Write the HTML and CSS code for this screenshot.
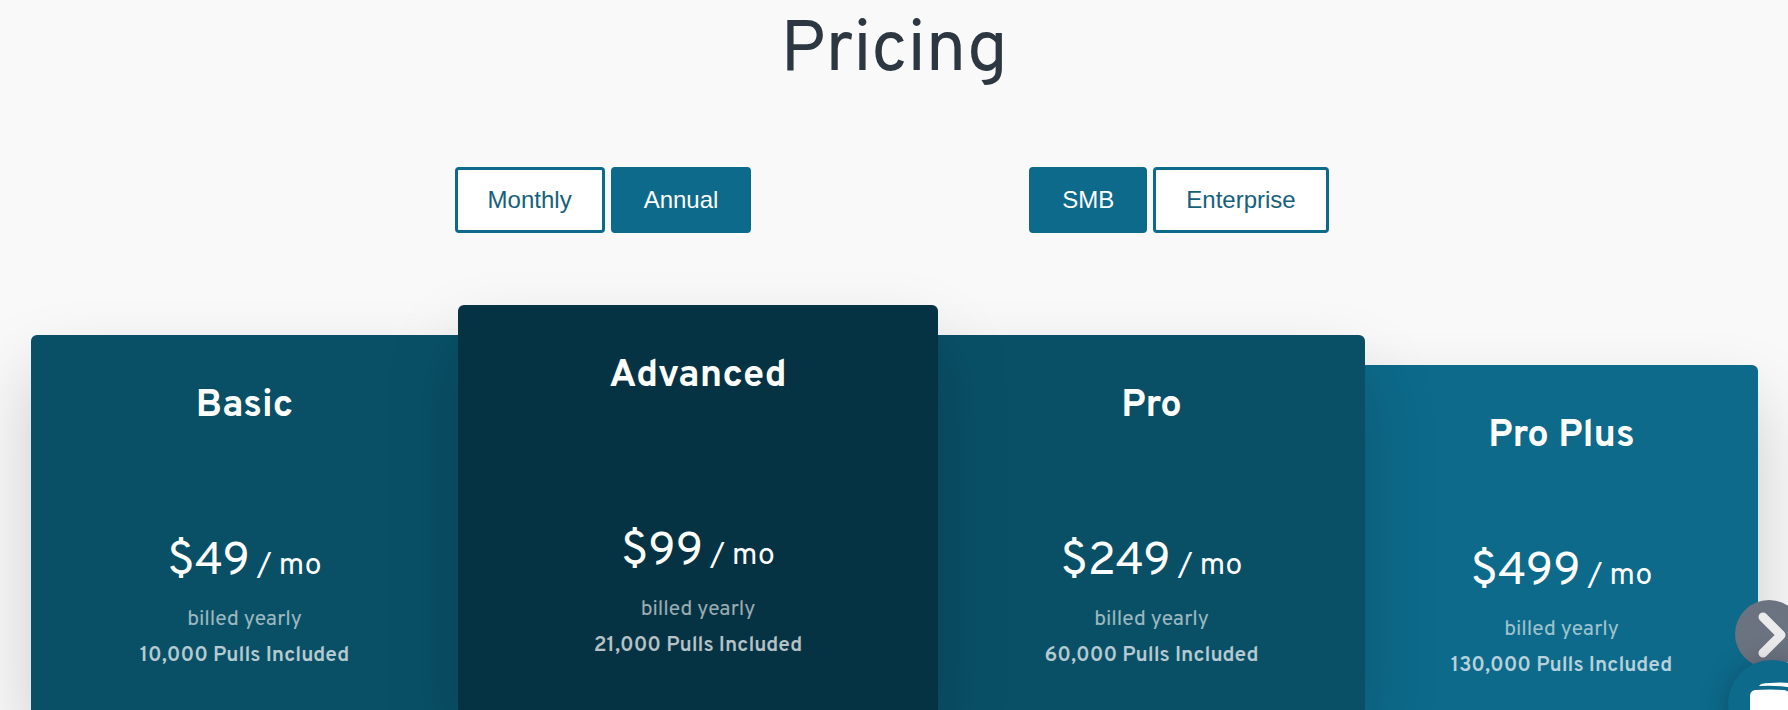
FILE: index.html
```html
<!DOCTYPE html>
<html lang="en">
<head>
    <meta charset="UTF-8">
    <meta name="viewport" content="width=device-width, initial-scale=1.0">
    <title>Pricing</title>
    <link rel="stylesheet" href="styles.css">
</head>
<body>
    <main class="pricing">
        <h1>Pricing</h1>

        <div class="toggles">
            <div class="toggle-group" role="group" aria-label="Billing period">
                <button type="button" class="toggle">Monthly</button>
                <button type="button" class="toggle active">Annual</button>
            </div>
            <div class="toggle-group" role="group" aria-label="Company size">
                <button type="button" class="toggle active">SMB</button>
                <button type="button" class="toggle">Enterprise</button>
            </div>
        </div>

        <div class="plans">
            <section class="plan basic">
                <h2>Basic</h2>
                <p class="price">$49<span class="per"> / mo</span></p>
                <p class="billed">billed yearly</p>
                <p class="pulls">10,000 Pulls Included</p>
            </section>
            <section class="plan advanced">
                <h2>Advanced</h2>
                <p class="price">$99<span class="per"> / mo</span></p>
                <p class="billed">billed yearly</p>
                <p class="pulls">21,000 Pulls Included</p>
            </section>
            <section class="plan pro">
                <h2>Pro</h2>
                <p class="price">$249<span class="per"> / mo</span></p>
                <p class="billed">billed yearly</p>
                <p class="pulls">60,000 Pulls Included</p>
            </section>
            <section class="plan plus">
                <h2>Pro Plus</h2>
                <p class="price">$499<span class="per"> / mo</span></p>
                <p class="billed">billed yearly</p>
                <p class="pulls">130,000 Pulls Included</p>
            </section>
        </div>
    </main>

    <button type="button" class="next-btn" aria-label="Next plans">
        <svg viewBox="0 0 68 68" fill="none" stroke="#ebebeb" stroke-width="9" stroke-linecap="round" stroke-linejoin="round">
            <path d="M28 17 L46 35 L28 53"/>
        </svg>
    </button>
    <button type="button" class="chat-btn" aria-label="Open chat">
        <svg viewBox="0 0 88 88" fill="#fff">
            <path d="M31 26 Q32 23 42 23 Q52 22 62 23 L66 28 Q50 25 31 26 Z"/>
            <path d="M22 36 Q22 31 27 30 Q42 29 56 30 Q62 31 62 36 V56 Q62 60 58 60 H48 L36 68 V60 H28 Q22 60 22 54 Z"/>
        </svg>
    </button>
</body>
</html>
```
FILE: styles.css
```css
:root {
    --teal: #0d6a8a;
    --teal-dark: #095067;
    --teal-darkest: #063343;
    --background-color: #f9f9f9;
}

* {
    box-sizing: border-box;
}

body {
    margin: 0;
    height: 100vh;
    overflow: hidden;
    font-family: Overpass, Roboto, sans-serif;
    background: var(--background-color);
    color: #2d3742;
}

.pricing {
    display: flex;
    flex-direction: column;
    height: 100%;
}

h1 {
    margin: 0;
    padding-top: 14px;
    font-size: 72px;
    font-weight: 400;
    line-height: 76px;
    text-align: center;
}

.toggles {
    display: grid;
    grid-template-columns: 1fr 1fr;
    width: 100%;
    max-width: 1152px;
    margin: 77px auto 72px;
}

.toggle-group {
    display: flex;
    justify-content: center;
}

.toggle {
    height: 66px;
    margin-right: 6px;
    padding: 0 30px;
    border: 3px solid var(--teal);
    border-radius: 4px;
    background: #fff;
    color: #17607c;
    font-family: Arial, "Liberation Sans", sans-serif;
    font-size: 24px;
    cursor: pointer;
}

.toggle.active {
    background: var(--teal);
    color: #fff;
}

.plans {
    display: grid;
    flex: 1;
    grid-template-columns: 427fr 480fr 427fr 393fr;
    padding: 0 30px 0 31px;
}

.plan {
    position: relative;
    padding-top: 40px;
    color: #fff;
    text-align: center;
    box-shadow: 0 36px 72px rgba(0, 0, 0, 0.18);
}

.plan h2 {
    margin: 0;
    font-size: 38px;
    font-weight: 700;
    line-height: 64px;
}

.plan p {
    margin: 0;
}

.basic,
.pro {
    z-index: 1;
    margin-top: 30px;
    background: var(--teal-dark);
}

.basic {
    border-top-left-radius: 6px;
}

.pro {
    border-top-right-radius: 6px;
}

.advanced {
    z-index: 2;
    border-radius: 6px 6px 0 0;
    background: var(--teal-darkest);
}

.plus {
    margin-top: 60px;
    border-top-right-radius: 6px;
    background: var(--teal);
}

.plan .price {
    padding-top: 92px;
    font-size: 46px;
    line-height: 64px;
}

.advanced .price {
    padding-top: 112px;
}

.plus .price {
    padding-top: 72px;
}

.per {
    font-size: 30px;
}

.plan .billed {
    padding-top: 3px;
    font-size: 21px;
    line-height: 36px;
    opacity: 0.6;
}

.plan .pulls {
    font-size: 21px;
    font-weight: 600;
    line-height: 36px;
    opacity: 0.7;
}

.next-btn,
.chat-btn {
    position: fixed;
    z-index: 3;
    padding: 0;
    border: none;
    border-radius: 50%;
    cursor: pointer;
}

.next-btn svg,
.chat-btn svg {
    display: block;
}

.next-btn {
    right: -15px;
    bottom: 42px;
    width: 68px;
    height: 68px;
    background: #6b7280;
}

.chat-btn {
    right: -28px;
    bottom: -38px;
    width: 88px;
    height: 88px;
    background: var(--teal);
    box-shadow: 0 4px 28px rgba(0, 0, 0, 0.25);
}
```
